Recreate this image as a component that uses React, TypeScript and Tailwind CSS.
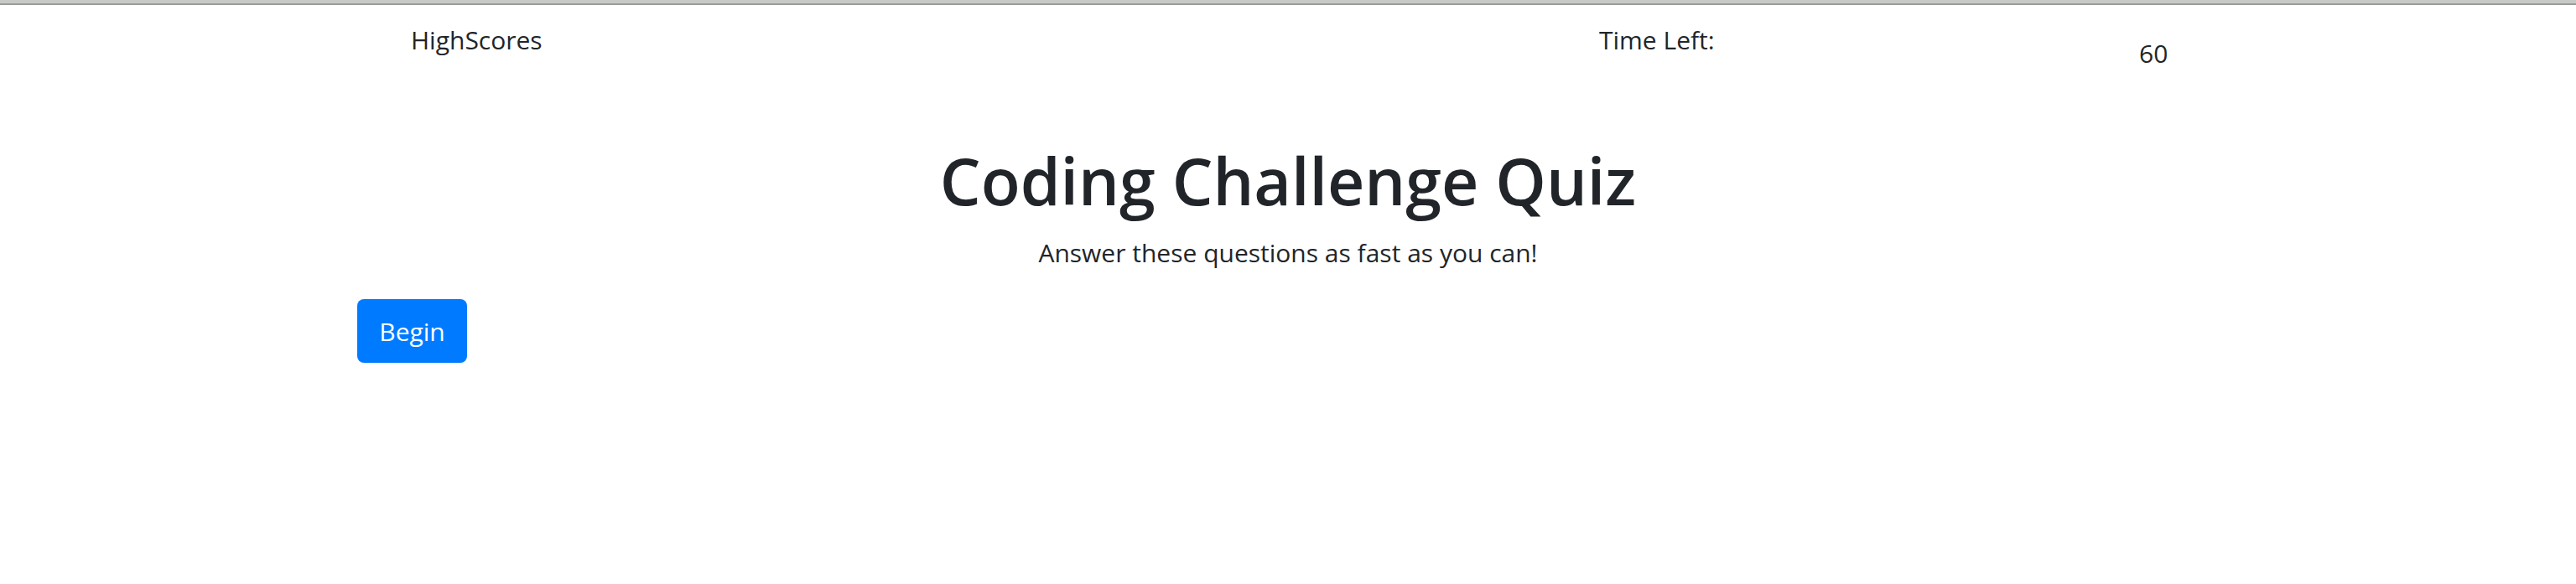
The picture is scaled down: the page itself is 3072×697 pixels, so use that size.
import React from "react";

export default function App() {
  return (
    <div className="min-h-[697px] w-full bg-white text-[#212529] font-['Open_Sans',sans-serif]">
      <div className="h-[4px] bg-[#c6c9c5]" />
      <div className="h-[2px] bg-[#9b9b9b]" />
      <header className="flex items-start pt-[19px] pl-[490px] text-[30px] leading-[45px]">
        <a className="w-[1417px] shrink-0">HighScores</a>
        <div className="w-[644px] shrink-0">Time Left:</div>
        <div className="mt-[16px]">60</div>
      </header>
      <main className="mx-auto w-[2280px] px-[30px]">
        <h1 className="mt-[84px] text-center text-[77px] font-semibold leading-[1.2]">
          Coding Challenge Quiz
        </h1>
        <p className="mt-[17px] text-center text-[30px] leading-[45px]">
          Answer these questions as fast as you can!
        </p>
        <button className="mt-[33px] flex h-[76px] w-[131px] items-center justify-center rounded-[8px] bg-[#007bff] text-[30px] text-white">
          Begin
        </button>
      </main>
    </div>
  );
}
